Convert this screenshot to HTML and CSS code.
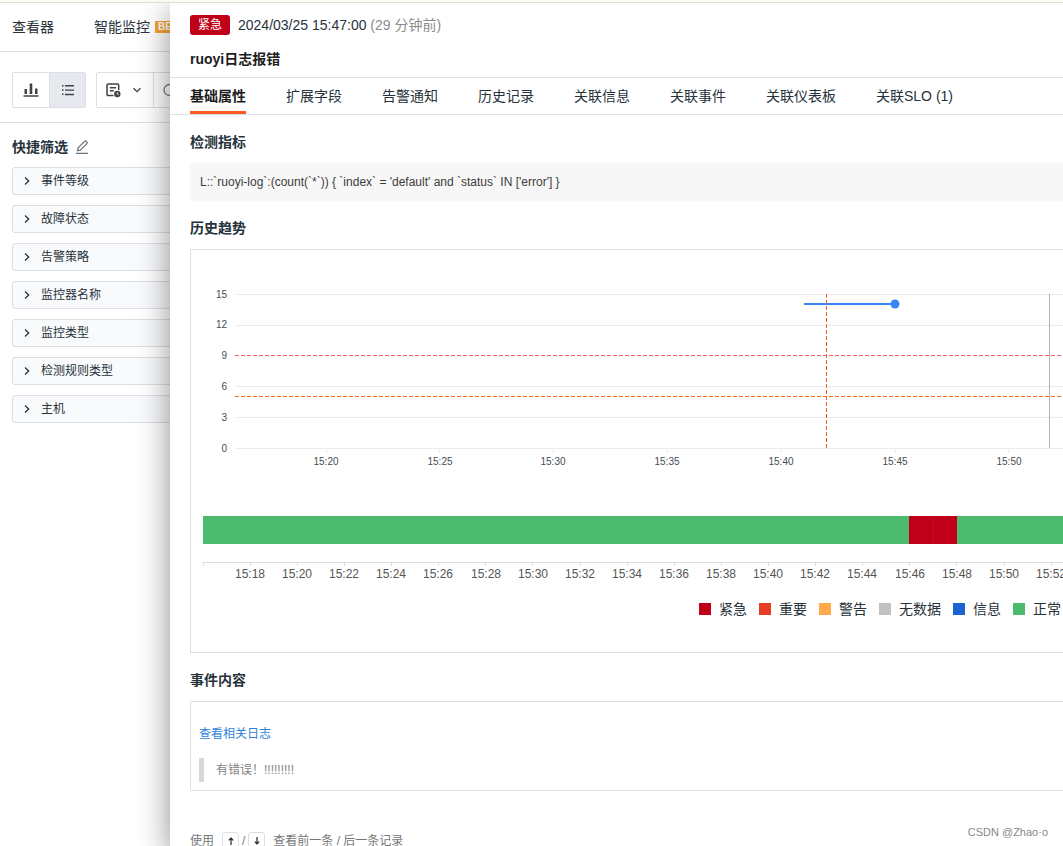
FILE: index.html
```html
<!DOCTYPE html>
<html lang="zh-CN">
<head>
<meta charset="utf-8">
<title>ruoyi日志报错</title>
<link rel="stylesheet" href="styles.css">
</head>
<body>
<div class="strip"></div>
<div class="page">
  <nav class="topnav">
    <a class="topnav-link" href="#">查看器</a>
    <a class="topnav-link" href="#">智能监控<span class="beta">BETA</span></a>
  </nav>
  <div class="toolbar">
    <div class="group">
      <button class="tool" type="button" aria-label="图表">
        <svg width="16" height="16" viewBox="0 0 16 16" fill="#3f4347"><path d="M0.500 13.200h15v1.600h-15zM1.500 7h2.500v5H1.500zM6.700 1.500h2.600V12H6.700zM12 6.500h2.500V12H12z"/></svg>
      </button>
      <button class="tool tool-on" type="button" aria-label="列表">
        <svg width="14" height="14" viewBox="0 0 14 14" fill="#3f4347"><path d="M1 2h1.500v1.500H1zM4 2h9v1.400H4zM1 6.300h1.500v1.500H1zM4 6.400h9v1.400H4zM1 10.600h1.500v1.500H1zM4 10.800h9v1.400H4z"/></svg>
      </button>
    </div>
    <div class="group group-search">
      <button class="tool tool-wide" type="button" aria-label="时间">
        <svg width="16" height="16" viewBox="0 0 16 16" fill="none" stroke="#3f4347" stroke-width="1.500"><path d="M8.500 13.500H3.200a1.200 1.200 0 0 1-1.200-1.200V3.200A1.200 1.200 0 0 1 3.200 2h9.300a1.200 1.200 0 0 1 1.200 1.200V8M4.800 5.700h6.200M4.800 8.700h4"/><circle cx="12.300" cy="12" r="3.200" fill="#3f4347" stroke="none"/><path d="M12.300 10.200v2h1.500" stroke="#fff" stroke-width="0.800"/></svg>
        <svg width="10" height="10" viewBox="0 0 10 10" fill="none" stroke="#3f4347" stroke-width="1.300"><path d="M1.500 3.200L5 6.700L8.500 3.200"/></svg>
      </button>
      <label class="search">
        <svg width="14" height="14" viewBox="0 0 14 14" fill="none" stroke="#777" stroke-width="1.300"><circle cx="6.500" cy="7" r="5.500"/><path d="M10.500 11l3 3"/></svg>
        <input class="search-input" type="text" aria-label="搜索">
      </label>
    </div>
  </div>
  <aside class="filters">
    <div class="filters-head">
      <h2 class="heading">快捷筛选</h2>
      <svg width="14" height="14" viewBox="0 0 14 14" fill="none" stroke="#6d7278" stroke-width="1.200"><path d="M2.500 10.700l.6-2.900L9.600 1.300a1 1 0 0 1 1.400 0l.9.9a1 1 0 0 1 0 1.400L5.400 10.100zM1 13.400h12"/></svg>
    </div>
    <button class="filter" type="button"><svg class="chev" viewBox="0 0 8 8"><path d="M2 0.500L5.700 4L2 7.500"/></svg>事件等级</button>
    <button class="filter" type="button"><svg class="chev" viewBox="0 0 8 8"><path d="M2 0.500L5.700 4L2 7.500"/></svg>故障状态</button>
    <button class="filter" type="button"><svg class="chev" viewBox="0 0 8 8"><path d="M2 0.500L5.700 4L2 7.500"/></svg>告警策略</button>
    <button class="filter" type="button"><svg class="chev" viewBox="0 0 8 8"><path d="M2 0.500L5.700 4L2 7.500"/></svg>监控器名称</button>
    <button class="filter" type="button"><svg class="chev" viewBox="0 0 8 8"><path d="M2 0.500L5.700 4L2 7.500"/></svg>监控类型</button>
    <button class="filter" type="button"><svg class="chev" viewBox="0 0 8 8"><path d="M2 0.500L5.700 4L2 7.500"/></svg>检测规则类型</button>
    <button class="filter" type="button"><svg class="chev" viewBox="0 0 8 8"><path d="M2 0.500L5.700 4L2 7.500"/></svg>主机</button>
  </aside>
</div>

<main class="drawer">
  <header class="head">
    <div class="head-row"><span class="level">紧急</span><span>2024/03/25 15:47:00 <span class="ago">(29 分钟前)</span></span></div>
    <h1 class="title">ruoyi日志报错</h1>
  </header>
  <nav class="tabs">
    <a class="tab tab-on" href="#">基础属性</a>
    <a class="tab" href="#">扩展字段</a>
    <a class="tab" href="#">告警通知</a>
    <a class="tab" href="#">历史记录</a>
    <a class="tab" href="#">关联信息</a>
    <a class="tab" href="#">关联事件</a>
    <a class="tab" href="#">关联仪表板</a>
    <a class="tab" href="#">关联SLO (1)</a>
  </nav>
  <div class="body">
    <section class="section">
      <h2 class="heading">检测指标</h2>
      <code class="query">L::`ruoyi-log`:(count(`*`)) { `index` = 'default' and `status` IN ['error'] }</code>
    </section>
    <section class="section">
      <h2 class="heading">历史趋势</h2>
      <div class="panel trend">
        <svg class="chart" role="img" aria-label="历史趋势">
          <g stroke="#ececec" shape-rendering="crispEdges">
            <path d="M44 44.500H872M44 75.500H872M44 136.500H872M44 167.500H872M44 198.500H872"/>
            <path d="M135.500 199v4M248.500 199v4M362.500 199v4M476.500 199v4M590.500 199v4M704.500 199v4M817.500 199v4"/>
          </g>
          <g class="axis-y">
            <text x="36" y="48">15</text><text x="36" y="78">12</text><text x="36" y="109">9</text><text x="36" y="140">6</text><text x="36" y="171">3</text><text x="36" y="202">0</text>
          </g>
          <g class="axis-x">
            <text x="135" y="215">15:20</text><text x="249" y="215">15:25</text><text x="362" y="215">15:30</text><text x="476" y="215">15:35</text><text x="590" y="215">15:40</text><text x="704" y="215">15:45</text><text x="818" y="215">15:50</text>
          </g>
          <path d="M44 105.500H870" stroke="#f5636a" stroke-dasharray="4 2"/>
          <path d="M44 146.500H870" stroke="#fc6b21" stroke-dasharray="4 2"/>
          <path d="M613 54H704" stroke="#3b86f7" stroke-width="2"/>
          <circle cx="704" cy="54" r="4.500" fill="#3b86f7"/>
          <path d="M635.500 44V198" stroke="#fc5a1f" stroke-dasharray="4 2"/>
          <path d="M858.500 44V198" stroke="#b0b0ba"/>
        </svg>
        <svg class="timeline" role="img" aria-label="状态时间线">
          <rect width="100%" height="28" fill="#4dbb6d"/>
          <rect x="706" width="48" height="28" fill="#c00018"/>
          <path d="M730.500 0v28" stroke="#c40d24"/>
          <path d="M0 46.500H1000M.5 46v4M47.500 46v4M94.500 46v4M141.500 46v4M188.500 46v4M235.500 46v4M282.500 46v4M329.500 46v4M377.500 46v4M424.500 46v4M471.500 46v4M518.500 46v4M565.500 46v4M612.500 46v4M659.500 46v4M706.500 46v4M753.500 46v4M801.500 46v4M848.500 46v4" stroke="#d9dce3" fill="none"/>
          <g class="axis-time">
            <text x="47" y="62">15:18</text><text x="94" y="62">15:20</text><text x="141" y="62">15:22</text><text x="188" y="62">15:24</text><text x="235" y="62">15:26</text><text x="283" y="62">15:28</text><text x="330" y="62">15:30</text><text x="377" y="62">15:32</text><text x="424" y="62">15:34</text><text x="471" y="62">15:36</text><text x="518" y="62">15:38</text><text x="565" y="62">15:40</text><text x="612" y="62">15:42</text><text x="659" y="62">15:44</text><text x="707" y="62">15:46</text><text x="754" y="62">15:48</text><text x="801" y="62">15:50</text><text x="848" y="62">15:52</text>
          </g>
        </svg>
        <ul class="legend">
          <li class="legend-item"><i class="swatch urgent"></i>紧急</li>
          <li class="legend-item"><i class="swatch major"></i>重要</li>
          <li class="legend-item"><i class="swatch warn"></i>警告</li>
          <li class="legend-item"><i class="swatch nodata"></i>无数据</li>
          <li class="legend-item"><i class="swatch info"></i>信息</li>
          <li class="legend-item"><i class="swatch ok"></i>正常</li>
        </ul>
      </div>
    </section>
    <section class="section">
      <h2 class="heading">事件内容</h2>
      <div class="panel event">
        <a class="log-link" href="#">查看相关日志</a>
        <blockquote class="quote">有错误！!!!!!!!!!</blockquote>
      </div>
    </section>
    <footer class="hint">使用 <span class="keys"><kbd class="key"><svg width="8" height="8" viewBox="0 0 8 8"><path d="M4 8V1M1.800 3.300L4 1L6.200 3.300"/></svg></kbd>/<kbd class="key"><svg width="8" height="8" viewBox="0 0 8 8"><path d="M4 0V7M1.800 4.700L4 7L6.200 4.700"/></svg></kbd></span> 查看前一条 / 后一条记录</footer>
  </div>
</main>
<div class="watermark">CSDN @Zhao·o</div>
</body>
</html>
```
FILE: styles.css
```css
* { box-sizing: border-box; }
body {
  margin: 0;
  height: 100vh;
  overflow: hidden;
  background: #fff;
  color: #27323a;
  font: 14px/20px "Liberation Sans", "Noto Sans CJK SC", sans-serif;
}
a { color: inherit; text-decoration: none; }
button { font: inherit; color: inherit; margin: 0; cursor: pointer; }
svg { display: block; flex: none; }
.strip {
  position: relative;
  z-index: 2;
  height: 3px;
  background: #fafaf4;
  border-bottom: 1px solid #dfdedb;
}

.topnav {
  display: flex;
  align-items: center;
  gap: 40px;
  height: 49px;
  padding: 0 12px;
  border-bottom: 1px solid #dcdee3;
}
.topnav-link { display: flex; align-items: center; gap: 5px; white-space: nowrap; }
.beta {
  padding: 0 3px;
  border-radius: 1px;
  background: #f9a22e;
  color: #fff;
  font-size: 10px;
  line-height: 12px;
  font-weight: 700;
}
.toolbar {
  display: flex;
  gap: 10px;
  height: 71px;
  padding: 20px 12px 14px;
  border-bottom: 1px solid #dcdee3;
}
.group { display: flex; height: 36px; border: 1px solid #dcdee6; border-radius: 2px; }
.group-search { flex: 1; }
.tool {
  display: flex;
  align-items: center;
  justify-content: center;
  width: 36px;
  padding: 0;
  border: 0;
  background: #fff;
}
.tool-on { background: #e8e9ef; border-left: 1px solid #dcdee6; }
.tool-wide { width: 57px; gap: 11px; padding-right: 3px; border-right: 1px solid #dcdee6; }
.search { display: flex; flex: 1; align-items: center; padding: 0 9px; }
.search-input { flex: 1; border: 0; outline: 0; background: none; }

.filters { display: flex; flex-direction: column; gap: 10px; width: 240px; padding: 14px 12px; }
.filters-head { display: flex; align-items: center; gap: 7px; }
.heading { margin: 0; font-size: 14px; line-height: 20px; font-weight: 700; }
.filter {
  display: flex;
  align-items: center;
  gap: 10px;
  height: 28px;
  padding: 0 10px;
  border: 1px solid #dcdfe6;
  border-radius: 3px;
  background: #f9fafc;
  font-size: 12px;
}
.chev { width: 8px; height: 8px; fill: none; stroke: #27323a; stroke-width: 1.3; }

.drawer {
  position: absolute;
  top: 3px;
  right: 0;
  bottom: 0;
  left: 170px;
  display: flex;
  flex-direction: column;
  overflow: hidden;
  background: #fff;
  box-shadow: 0 10px 30px rgba(0, 0, 0, 0.45);
}
.head { padding: 12px 20px 8px; border-bottom: 1px solid #dfe0e2; }
.head-row { display: flex; align-items: center; gap: 8px; }
.level { padding: 0 8px; border-radius: 3px; background: #c00018; color: #fff; font-size: 12px; }
.ago { color: #8b8b8b; }
.title { margin: 14px 0 0; color: #1d1d1d; font-size: 14px; line-height: 20px; font-weight: 700; }
.tabs { display: flex; gap: 40px; padding: 0 20px; border-bottom: 1px solid #dfdfe6; }
.tab { height: 36px; line-height: 36px; white-space: nowrap; }
.tab-on { border-bottom: 3px solid #ff571f; color: #1d1d1d; font-weight: 700; }
.body { padding: 17px 0 0 20px; }
.section { margin-bottom: 17px; }
.query {
  display: block;
  margin-top: 11px;
  padding: 9px 10px;
  border-radius: 2px 0 0 2px;
  background: #f7f7f7;
  color: #3c3c3c;
  font-family: "Liberation Sans", "Noto Sans CJK SC", sans-serif;
  font-size: 12px;
}
.panel { margin-top: 11px; border: 1px solid #dcdee3; border-right: 0; }
.chart { width: 100%; height: 266px; overflow: hidden; }
.axis-y, .axis-x { font-size: 10px; fill: #464c52; }
.axis-y { text-anchor: end; }
.axis-x, .axis-time { text-anchor: middle; }
.axis-time { font-size: 12px; fill: #555; }
.trend { padding-bottom: 33px; }
.timeline { width: calc(100% - 12px); height: 72px; margin-left: 12px; overflow: hidden; }
.legend {
  display: flex;
  justify-content: flex-end;
  gap: 12px;
  margin: 11px 2px 0 0;
  padding: 0;
  list-style: none;
}
.legend-item { display: flex; align-items: center; gap: 8px; }
.swatch { width: 12px; height: 12px; }
.urgent { background: #c00018; }
.major { background: #e83e26; }
.warn { background: #ffa94a; }
.nodata { background: #c2c2c2; }
.info { background: #1a63d0; }
.ok { background: #4dbb6d; }
.event { padding: 22px 8px 8px; border-radius: 2px 0 0 2px; font-size: 12px; }
.log-link { color: #2e82da; }
.quote {
  margin: 14px 0 0;
  padding-left: 12px;
  border-left: 5px solid #d8d8d8;
  color: #858585;
  line-height: 24px;
}
.hint { display: flex; align-items: center; gap: 8px; padding-top: 23px; color: #777; font-size: 12px; }
.keys { display: flex; align-items: center; gap: 3px; }
.key {
  display: flex;
  align-items: center;
  justify-content: center;
  width: 17px;
  height: 18px;
  border: 1px solid #dcdee3;
  border-radius: 3px;
}
.key svg { fill: none; stroke: #222; stroke-width: 1.2; }
.watermark {
  position: absolute;
  right: 15px;
  bottom: 6px;
  color: #888;
  font: 11px/16px "Liberation Sans", sans-serif;
}
```
